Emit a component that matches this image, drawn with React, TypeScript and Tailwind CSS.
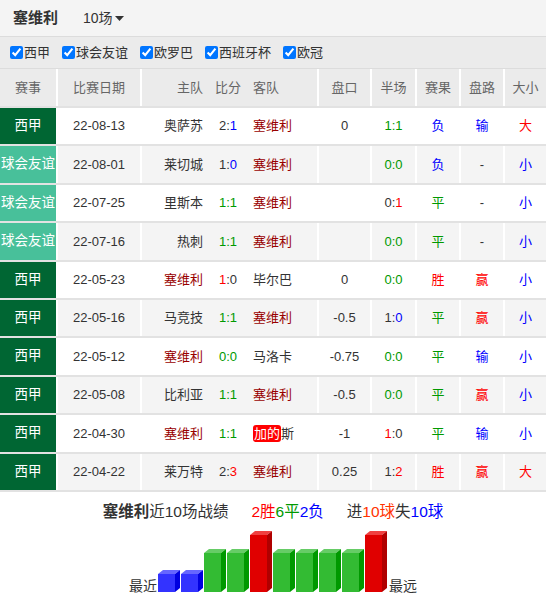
import React from "react"

type C = 'd' | 'b' | 'r' | 'g' | 'h'

const color: Record<C, string> = {
  d: 'text-[#333]',
  b: 'text-[#0000ff]',
  r: 'text-[#ff0000]',
  g: 'text-[#009900]',
  h: 'text-[#990000]',
}

interface Match {
  lg: '西甲' | '球会友谊'
  date: string
  home: [string, C]
  sc: [string, C, string, C]
  away: [string, C]
  pk: string
  ht: [string, C, string, C]
  res: [string, C]
  pl: [string, C]
  dx: [string, C]
  badge?: boolean
}

const matches: Match[] = [
  { lg: '西甲', date: '22-08-13', home: ['奥萨苏', 'd'], sc: ['2', 'd', '1', 'b'], away: ['塞维利', 'h'], pk: '0', ht: ['1', 'g', '1', 'g'], res: ['负', 'b'], pl: ['输', 'b'], dx: ['大', 'r'] },
  { lg: '球会友谊', date: '22-08-01', home: ['莱切城', 'd'], sc: ['1', 'd', '0', 'b'], away: ['塞维利', 'h'], pk: '', ht: ['0', 'g', '0', 'g'], res: ['负', 'b'], pl: ['-', 'd'], dx: ['小', 'b'] },
  { lg: '球会友谊', date: '22-07-25', home: ['里斯本', 'd'], sc: ['1', 'g', '1', 'g'], away: ['塞维利', 'h'], pk: '', ht: ['0', 'd', '1', 'r'], res: ['平', 'g'], pl: ['-', 'd'], dx: ['小', 'b'] },
  { lg: '球会友谊', date: '22-07-16', home: ['热刺', 'd'], sc: ['1', 'g', '1', 'g'], away: ['塞维利', 'h'], pk: '', ht: ['0', 'g', '0', 'g'], res: ['平', 'g'], pl: ['-', 'd'], dx: ['小', 'b'] },
  { lg: '西甲', date: '22-05-23', home: ['塞维利', 'h'], sc: ['1', 'r', '0', 'd'], away: ['毕尔巴', 'd'], pk: '0', ht: ['0', 'g', '0', 'g'], res: ['胜', 'r'], pl: ['赢', 'r'], dx: ['小', 'b'] },
  { lg: '西甲', date: '22-05-16', home: ['马竞技', 'd'], sc: ['1', 'g', '1', 'g'], away: ['塞维利', 'h'], pk: '-0.5', ht: ['1', 'd', '0', 'b'], res: ['平', 'g'], pl: ['赢', 'r'], dx: ['小', 'b'] },
  { lg: '西甲', date: '22-05-12', home: ['塞维利', 'h'], sc: ['0', 'g', '0', 'g'], away: ['马洛卡', 'd'], pk: '-0.75', ht: ['0', 'g', '0', 'g'], res: ['平', 'g'], pl: ['输', 'b'], dx: ['小', 'b'] },
  { lg: '西甲', date: '22-05-08', home: ['比利亚', 'd'], sc: ['1', 'g', '1', 'g'], away: ['塞维利', 'h'], pk: '-0.5', ht: ['0', 'g', '0', 'g'], res: ['平', 'g'], pl: ['赢', 'r'], dx: ['小', 'b'] },
  { lg: '西甲', date: '22-04-30', home: ['塞维利', 'h'], sc: ['1', 'g', '1', 'g'], away: ['加的斯', 'd'], pk: '-1', ht: ['1', 'r', '0', 'd'], res: ['平', 'g'], pl: ['输', 'b'], dx: ['小', 'b'], badge: true },
  { lg: '西甲', date: '22-04-22', home: ['莱万特', 'd'], sc: ['2', 'd', '3', 'r'], away: ['塞维利', 'h'], pk: '0.25', ht: ['1', 'd', '2', 'r'], res: ['胜', 'r'], pl: ['赢', 'r'], dx: ['大', 'r'] },
]

const grid = "grid grid-cols-[58px_84px_177px_53px_45px_44px_44px_41px]"
const cell = "flex items-center justify-center border-r-2 border-white"

function Score({ s }: { s: [string, C, string, C] }) {
  const colon: C = s[1] === 'g' && s[3] === 'g' ? 'g' : 'd'
  return (
    <span>
      <span className={color[s[1]]}>{s[0]}</span>
      <span className={color[colon]}>:</span>
      <span className={color[s[3]]}>{s[2]}</span>
    </span>
  )
}

const filters = ['西甲', '球会友谊', '欧罗巴', '西班牙杯', '欧冠']

const bars: ('b' | 'g' | 'r')[] = ['b', 'b', 'g', 'g', 'r', 'g', 'g', 'g', 'g', 'r']
const barStyle = {
  b: { h: 18, front: '#3333ff', top: '#6666ff', side: '#0000e0' },
  g: { h: 39, front: '#33bb33', top: '#66cc66', side: '#009900' },
  r: { h: 57, front: '#e00000', top: '#f04040', side: '#b00000' },
}

function Chart() {
  const base = 62
  return (
    <svg width="229" height="62" className="block">
      {bars.map((k, i) => {
        const x = i * 23
        const { h, front, top, side } = barStyle[k]
        const y = base - h
        return (
          <g key={i}>
            <polygon points={`${x},${y} ${x + 5},${y - 4} ${x + 22},${y - 4} ${x + 17},${y}`} fill={top} />
            <polygon points={`${x + 17},${y} ${x + 22},${y - 4} ${x + 22},${base - 4} ${x + 17},${base}`} fill={side} />
            <rect x={x} y={y} width="17" height={h} fill={front} />
          </g>
        )
      })}
    </svg>
  )
}

export default function App() {
  return (
    <div className="w-[546px] h-[600px] bg-white text-[#333] text-[13px] font-[family-name:Liberation_Sans,Noto_Sans_CJK_SC,sans-serif] overflow-hidden">
      {/* top bar */}
      <div className="h-[37px] bg-[#f4f4f4] border-b border-[#dcdcdc] flex items-center pl-[13px]">
        <span className="text-[15px] font-bold">塞维利</span>
        <span className="ml-[25px] text-[14px] flex items-center">
          10场
          <svg width="9" height="5" className="ml-[2px]"><polygon points="0,0 9,0 4.5,5" fill="#333" /></svg>
        </span>
      </div>

      {/* filters */}
      <div className="h-[32px] bg-[#ebebeb] border-b border-[#dcdcdc] flex items-center pl-[10px] gap-[12px]">
        {filters.map(f => (
          <label key={f} className="flex items-center gap-[1px]">
            <input type="checkbox" defaultChecked className="m-0 w-[13px] h-[13px] accent-[#0075ff]" />
            <span>{f}</span>
          </label>
        ))}
      </div>

      {/* table head */}
      <div className={`${grid} h-[39px] bg-[#ebebeb] text-[#666] border-b-2 border-[#e2e2e2]`}>
        <div className={cell}>赛事</div>
        <div className={cell}>比赛日期</div>
        <div className="grid grid-cols-[61px_50px_1fr] items-center border-r-2 border-white">
          <span className="text-right">主队</span>
          <span className="text-center">比分</span>
          <span>客队</span>
        </div>
        <div className={cell}>盘口</div>
        <div className={cell}>半场</div>
        <div className={cell}>赛果</div>
        <div className={cell}>盘路</div>
        <div className="flex items-center justify-center">大小</div>
      </div>

      {matches.map((m, i) => (
        <div
          key={i}
          className={`${grid} h-[38.4px] border-b-2 border-[#e2e2e2] ${i % 2 === 1 ? 'bg-[#f4f4f4]' : 'bg-white'}`}
        >
          <div className={`${cell} text-white text-[13.5px] ${m.lg === '西甲' ? 'bg-[#006633]' : 'bg-[#48c09a]'}`}>{m.lg}</div>
          <div className={cell}>{m.date}</div>
          <div className="grid grid-cols-[61px_50px_1fr] items-center border-r-2 border-white">
            <span className={`text-right ${color[m.home[1]]}`}>{m.home[0]}</span>
            <span className="text-center"><Score s={m.sc} /></span>
            {m.badge ? (
              <span className="flex items-center">
                <span className="bg-[#ff0000] text-white rounded-[3px] px-[1px] leading-[17px]">加的</span>
                <span>斯</span>
              </span>
            ) : (
              <span className={color[m.away[1]]}>{m.away[0]}</span>
            )}
          </div>
          <div className={cell}>{m.pk}</div>
          <div className={cell}><Score s={m.ht} /></div>
          <div className={`${cell} ${color[m.res[1]]}`}>{m.res[0]}</div>
          <div className={`${cell} ${color[m.pl[1]]}`}>{m.pl[0]}</div>
          <div className={`flex items-center justify-center ${color[m.dx[1]]}`}>{m.dx[0]}</div>
        </div>
      ))}

      {/* summary */}
      <div className="pt-[10px] flex flex-col items-center">
        <div className="text-[15.5px] leading-[20px] flex">
          <span><span className="font-bold">塞维利</span>近10场战绩</span>
          <span className="ml-[23px]">
            <span className="text-[#ff0000]">2胜</span>
            <span className="text-[#009900]">6平</span>
            <span className="text-[#0000ff]">2负</span>
          </span>
          <span className="ml-[23px]">
            进<span className="text-[#ff3300]">10球</span>失<span className="text-[#0000ff]">10球</span>
          </span>
        </div>
        <div className="mt-[8px] flex items-end">
          <span className="text-[14px] leading-[16px] mr-[1px] -mb-[2px]">最近</span>
          <Chart />
          <span className="text-[14px] leading-[16px] ml-[2px] -mb-[2px]">最远</span>
        </div>
      </div>
    </div>
  )
}
